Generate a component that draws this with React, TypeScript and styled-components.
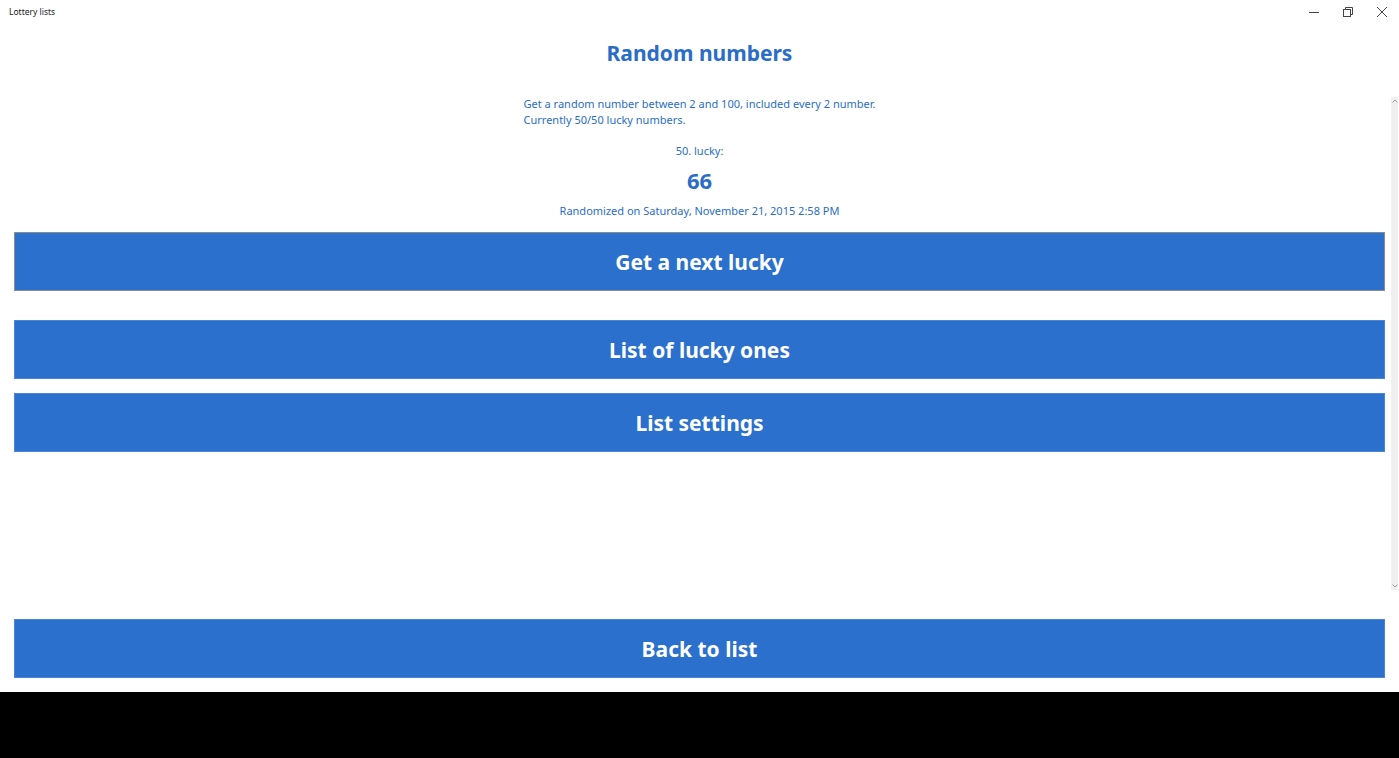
import styled, { createGlobalStyle } from "styled-components";

const GlobalStyle = createGlobalStyle`
  html, body {
    margin: 0;
    padding: 0;
    background: #ffffff;
  }
  body {
    font-family: "Noto Sans", "Open Sans", sans-serif;
  }
`;

const Window = styled.div`
  height: 758px;
  width: 1399px;
  display: flex;
  flex-direction: column;
  overflow: hidden;
`;

const TitleBar = styled.div`
  height: 32px;
  flex-shrink: 0;
  display: flex;
  align-items: flex-start;
  justify-content: space-between;
`;

const AppName = styled.div`
  font-size: 8.5px;
  color: #1a1a1a;
  padding: 6px 0 0 9px;
`;

const Controls = styled.div`
  display: flex;
`;

const ControlButton = styled.div`
  width: 34px;
  height: 23px;
  display: flex;
  align-items: center;
  justify-content: center;
  color: #444;
`;

const Content = styled.div`
  position: relative;
  flex: 1;
  display: flex;
  flex-direction: column;
  padding: 0 14px;
`;

const Scroller = styled.div`
  flex: 1;
  display: flex;
  flex-direction: column;
  align-items: center;
`;

const ScrollTrack = styled.div`
  position: absolute;
  right: 1px;
  top: 65px;
  width: 7px;
  height: 493px;
  background: #f0f0f0;
  display: flex;
  flex-direction: column;
  justify-content: space-between;
  align-items: center;
  padding: 2px 0;
  box-sizing: border-box;
`;

const Title = styled.h1`
  margin: 6px 0 0;
  font-size: 21px;
  line-height: 30px;
  font-weight: 700;
  color: #2a6dc9;
`;

const Description = styled.p`
  margin: 28px 0 0;
  font-size: 11px;
  line-height: 16px;
  color: #2a6dc9;
  text-align: left;
`;

const Small = styled.div<{ $gap: number }>`
  margin-top: ${(p) => p.$gap}px;
  font-size: 11px;
  line-height: 16px;
  color: #2a6dc9;
`;

const Lucky = styled.div`
  margin-top: 6px;
  font-size: 22px;
  line-height: 30px;
  font-weight: 700;
  color: #2a6dc9;
`;

const Action = styled.button<{ $gap: number; $focused?: boolean }>`
  align-self: stretch;
  margin-top: ${(p) => p.$gap}px;
  height: 59px;
  flex-shrink: 0;
  border: 1px solid ${(p) => (p.$focused ? "#8c8c8c" : "#4a86d8")};
  background: #2a70cc;
  color: #ffffff;
  font-family: "Noto Sans", "Open Sans", sans-serif;
  font-size: 21px;
  font-weight: 700;
  cursor: pointer;
  padding: 0;
`;

const BottomBar = styled.div`
  padding: 0 14px 14px;
  display: flex;
  flex-direction: column;
`;

const Footer = styled.div`
  height: 66px;
  flex-shrink: 0;
  background: #000000;
`;

function App() {
  return (
    <Window>
      <GlobalStyle />
      <TitleBar>
        <AppName>Lottery lists</AppName>
        <Controls>
          <ControlButton>
            <svg width="10" height="10" viewBox="0 0 10 10">
              <line x1="0" y1="5.5" x2="10" y2="5.5" stroke="currentColor" strokeWidth="1" />
            </svg>
          </ControlButton>
          <ControlButton>
            <svg width="10" height="10" viewBox="0 0 10 10" fill="none" stroke="currentColor" strokeWidth="1">
              <rect x="0.5" y="2.5" width="7" height="7" />
              <polyline points="2.5,2.5 2.5,0.5 9.5,0.5 9.5,7.5 7.5,7.5" />
            </svg>
          </ControlButton>
          <ControlButton>
            <svg width="10" height="10" viewBox="0 0 10 10" stroke="currentColor" strokeWidth="1">
              <line x1="0" y1="0" x2="10" y2="10" />
              <line x1="10" y1="0" x2="0" y2="10" />
            </svg>
          </ControlButton>
        </Controls>
      </TitleBar>
      <Content>
        <Scroller>
          <Title>Random numbers</Title>
          <Description>
            Get a random number between 2 and 100, included every 2 number.
            <br />
            Currently 50/50 lucky numbers.
          </Description>
          <Small $gap={15}>50. lucky:</Small>
          <Lucky>66</Lucky>
          <Small $gap={8}>Randomized on Saturday, November 21, 2015 2:58 PM</Small>
          <Action $gap={13} $focused>
            Get a next lucky
          </Action>
          <Action $gap={29}>List of lucky ones</Action>
          <Action $gap={14}>List settings</Action>
        </Scroller>
        <ScrollTrack>
          <svg width="6" height="4" viewBox="0 0 6 4" fill="none" stroke="#9a9a9a" strokeWidth="1">
            <polyline points="0.5,3.5 3,1 5.5,3.5" />
          </svg>
          <svg width="6" height="4" viewBox="0 0 6 4" fill="none" stroke="#9a9a9a" strokeWidth="1">
            <polyline points="0.5,0.5 3,3 5.5,0.5" />
          </svg>
        </ScrollTrack>
      </Content>
      <BottomBar>
        <Action $gap={0}>Back to list</Action>
      </BottomBar>
      <Footer />
    </Window>
  );
}

export default App;
